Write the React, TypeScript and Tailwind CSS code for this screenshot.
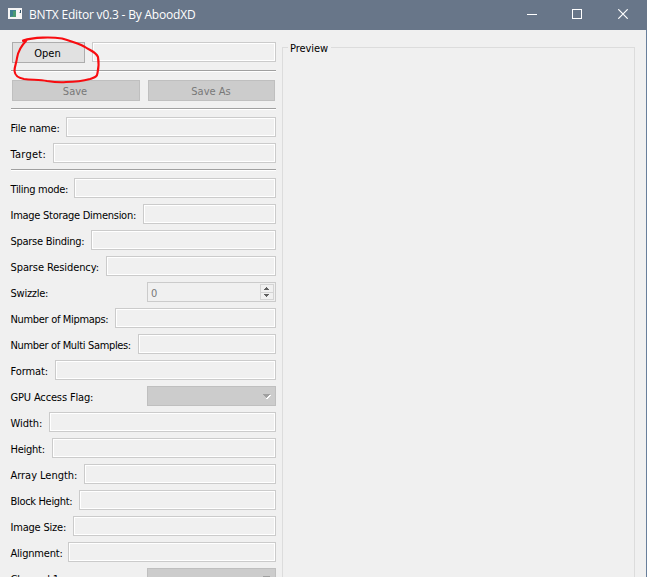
import clsx from 'clsx';

const general = [
  { label: 'File name:', width: 'w-[55px]', text: 'tracking-[-0.2px]' },
  { label: 'Target:', width: 'w-[42px]', text: 'tracking-[0.25px]' },
];

const texture = [
  { label: 'Tiling mode:', width: 'w-[63px]', text: 'tracking-[-0.3px]' },
  { label: 'Image Storage Dimension:', width: 'w-[132px]', text: 'tracking-[-0.27px]' },
  { label: 'Sparse Binding:', width: 'w-[80px]', text: 'tracking-[-0.27px]' },
  { label: 'Sparse Residency:', width: 'w-[95px]', text: 'tracking-[-0.09px]' },
  { label: 'Swizzle:', width: 'w-[136px]', text: 'tracking-[-0.25px]', kind: 'spin' },
  { label: 'Number of Mipmaps:', width: 'w-[104px]', text: 'tracking-[-0.32px]' },
  { label: 'Number of Multi Samples:', width: 'w-[127px]', text: 'tracking-[-0.34px]' },
  { label: 'Format:', width: 'w-[44px]', text: 'tracking-[-0.1px]' },
  { label: 'GPU Access Flag:', width: 'w-[136px]', text: 'tracking-[-0.15px]', kind: 'combo' },
  { label: 'Width:', width: 'w-[38px]', text: 'tracking-[-0.05px]' },
  { label: 'Height:', width: 'w-[41px]', text: 'tracking-[-0.25px]' },
  { label: 'Array Length:', width: 'w-[73px]', text: 'tracking-[-0.03px]' },
  { label: 'Block Height:', width: 'w-[68px]', text: 'tracking-[-0.32px]' },
  { label: 'Image Size:', width: 'w-[62px]', text: 'tracking-[-0.2px]' },
  { label: 'Alignment:', width: 'w-[57px]', text: 'tracking-[-0.2px]' },
  { label: 'Channel 1:', width: 'w-[136px]', text: 'tracking-[-0.2px]', kind: 'combo' },
];

function LineEdit() {
  return <div className="h-5 min-w-0 flex-1 border border-[#cbcbcb] bg-[#f0f0f0] shadow-[inset_0_0_0_1px_#fff]" />;
}

function Separator({ className }: { className?: string }) {
  return <div className={clsx('h-0.5 border-t border-[#a0a0a0] bg-white', className)} />;
}

function SpinBox() {
  return (
    <div className="flex h-5 flex-1 items-center justify-between border border-[#cbcbcb] pr-px pl-[3px] text-[#787878]">
      <span className="mt-1">0</span>
      <svg width="14" height="16" shapeRendering="crispEdges">
        <path d="M.5 .5h13v15h-13zM0 8.5h14" fill="none" stroke="#d4d4d4" />
        <path d="M6 3h1v1h1v1h1v1H4V5h1V4h1zM4 10h5v1H8v1H7v1H6v-1H5v-1H4z" fill="#606060" />
      </svg>
    </div>
  );
}

function ComboBox() {
  return (
    <div className="flex h-5 flex-1 items-center justify-end border border-[#bfbfbf] bg-[#cccccc] pt-px pr-1">
      <svg width="9" height="6" shapeRendering="crispEdges">
        <path d="M8 1h1v1H8v1H7v1H6v1H4V4h1V3h1V2h1V1z" fill="#fff" />
        <path d="M1 0h7v1H7v1H6v1H5v1H4V3H3V2H2V1H1z" fill="#a0a0a0" />
      </svg>
    </div>
  );
}

function Row({ label, width, text, kind }: { label: string; width: string; text: string; kind?: string }) {
  return (
    <div className="flex h-5 shrink-0 items-center">
      <div className={clsx('shrink-0 whitespace-nowrap pt-1 leading-[14px]', width, text)}>
        <span className="-ml-[0.5px]">{label}</span>
      </div>
      {kind === 'spin' ? <SpinBox /> : kind === 'combo' ? <ComboBox /> : <LineEdit />}
    </div>
  );
}

function TitleBar() {
  return (
    <header className="flex h-[30px] shrink-0 items-center bg-[#687689] pl-2 text-white">
      <svg width="15" height="12" className="mb-0.5 shrink-0" shapeRendering="crispEdges">
        <path d="M0 0h14v11H0z" fill="#f5f5f5" />
        <path d="M2 2h6v7H2z" fill="#3e7f91" />
        <path d="M5 3h3v6H3V8h2z" fill="#4a9a72" />
        <path d="M12 2h1v3h-1z" fill="#35566b" />
        <path d="M11 4h1v1h-1z" fill="#9fb6c0" />
      </svg>
      <h1 className="mb-px ml-[6px] flex-1 whitespace-nowrap font-['Open_Sans',sans-serif] text-[12px] tracking-[-0.2px]">
        BNTX Editor v0.3 - By AboodXD
      </h1>
      <svg width="10" height="10" className="mr-[35px]" shapeRendering="crispEdges">
        <path d="M0 4.5h10" stroke="#fff" />
      </svg>
      <svg width="10" height="10" className="mr-9 mb-0.5" shapeRendering="crispEdges">
        <path d="M.5 .5h9v9h-9z" fill="none" stroke="#fff" />
      </svg>
      <svg width="10" height="10" className="mr-[19px] mb-0.5">
        <path d="M.3 .3l9.4 9.4M9.7 .3L.3 9.7" stroke="#fff" strokeWidth="1.2" />
      </svg>
    </header>
  );
}

export default function App() {
  return (
    <div className="relative flex h-[577px] w-[647px] flex-col overflow-hidden bg-[#f0f0f0] font-['DejaVu_Sans_Condensed','DejaVu_Sans',sans-serif] text-[11px] text-black">
      <TitleBar />
      <main className="flex min-h-0 flex-1 border-r border-[#687f9b] pr-[11px] pl-[11px]">
        <section className="flex w-[265px] shrink-0 flex-col pt-3">
          <div className="flex h-[21px] shrink-0 items-start pl-px">
            <button className="mr-[7px] h-[21px] w-[73px] border border-[#adadad] bg-[#e1e1e1] pt-0.5 pr-0.5 leading-none">
              Open
            </button>
            <LineEdit />
          </div>
          <Separator className="mt-[7px] shrink-0" />
          <div className="mt-2 flex h-[21px] shrink-0 gap-2 pr-px pl-px text-[#787878]">
            <button className="w-32 border border-[#bfbfbf] bg-[#cccccc] pt-0.5 pr-0.5 leading-none">Save</button>
            <button className="flex-1 border border-[#bfbfbf] bg-[#cccccc] pt-0.5 pr-px leading-none">Save As</button>
          </div>
          <Separator className="mt-[7px] shrink-0" />
          <div className="mt-[7px] flex shrink-0 flex-col gap-1.5">
            {general.map((row) => (
              <Row key={row.label} {...row} />
            ))}
          </div>
          <Separator className="mt-1.5 shrink-0" />
          <div className="mt-[7px] flex shrink-0 flex-col gap-1.5">
            {texture.map((row) => (
              <Row key={row.label} {...row} />
            ))}
          </div>
        </section>
        <fieldset className="mt-[9px] ml-1.5 h-[700px] flex-1 border border-[#dcdcdc] pl-[5px]">
          <legend className="h-[17px] pr-[3px] pl-0.5 leading-[20px] tracking-[-0.05px]">Preview</legend>
        </fieldset>
      </main>
      {/* freehand mark around the Open button */}
      <svg className="pointer-events-none absolute top-[30px] left-2" width="100" height="60" fill="none" stroke="#f80c10" strokeWidth="2.1" strokeLinecap="round" strokeLinejoin="round">
        <path d="M15 11L19 9.500L18 11C13 16 10 22 9 28C8.500 33 6.500 36 6.500 41C7 46 10 48 16 49C24 50 32 49.500 39 51C46 52 52 52.500 58 52C68 52 75 51 82 49C87 47 89 47 89.500 43C91 37 91 33 90 27C88 22 83 21 77 17C70 13 62 11 54 8.500C44 7 26 7 15 10.500" />
      </svg>
    </div>
  );
}
